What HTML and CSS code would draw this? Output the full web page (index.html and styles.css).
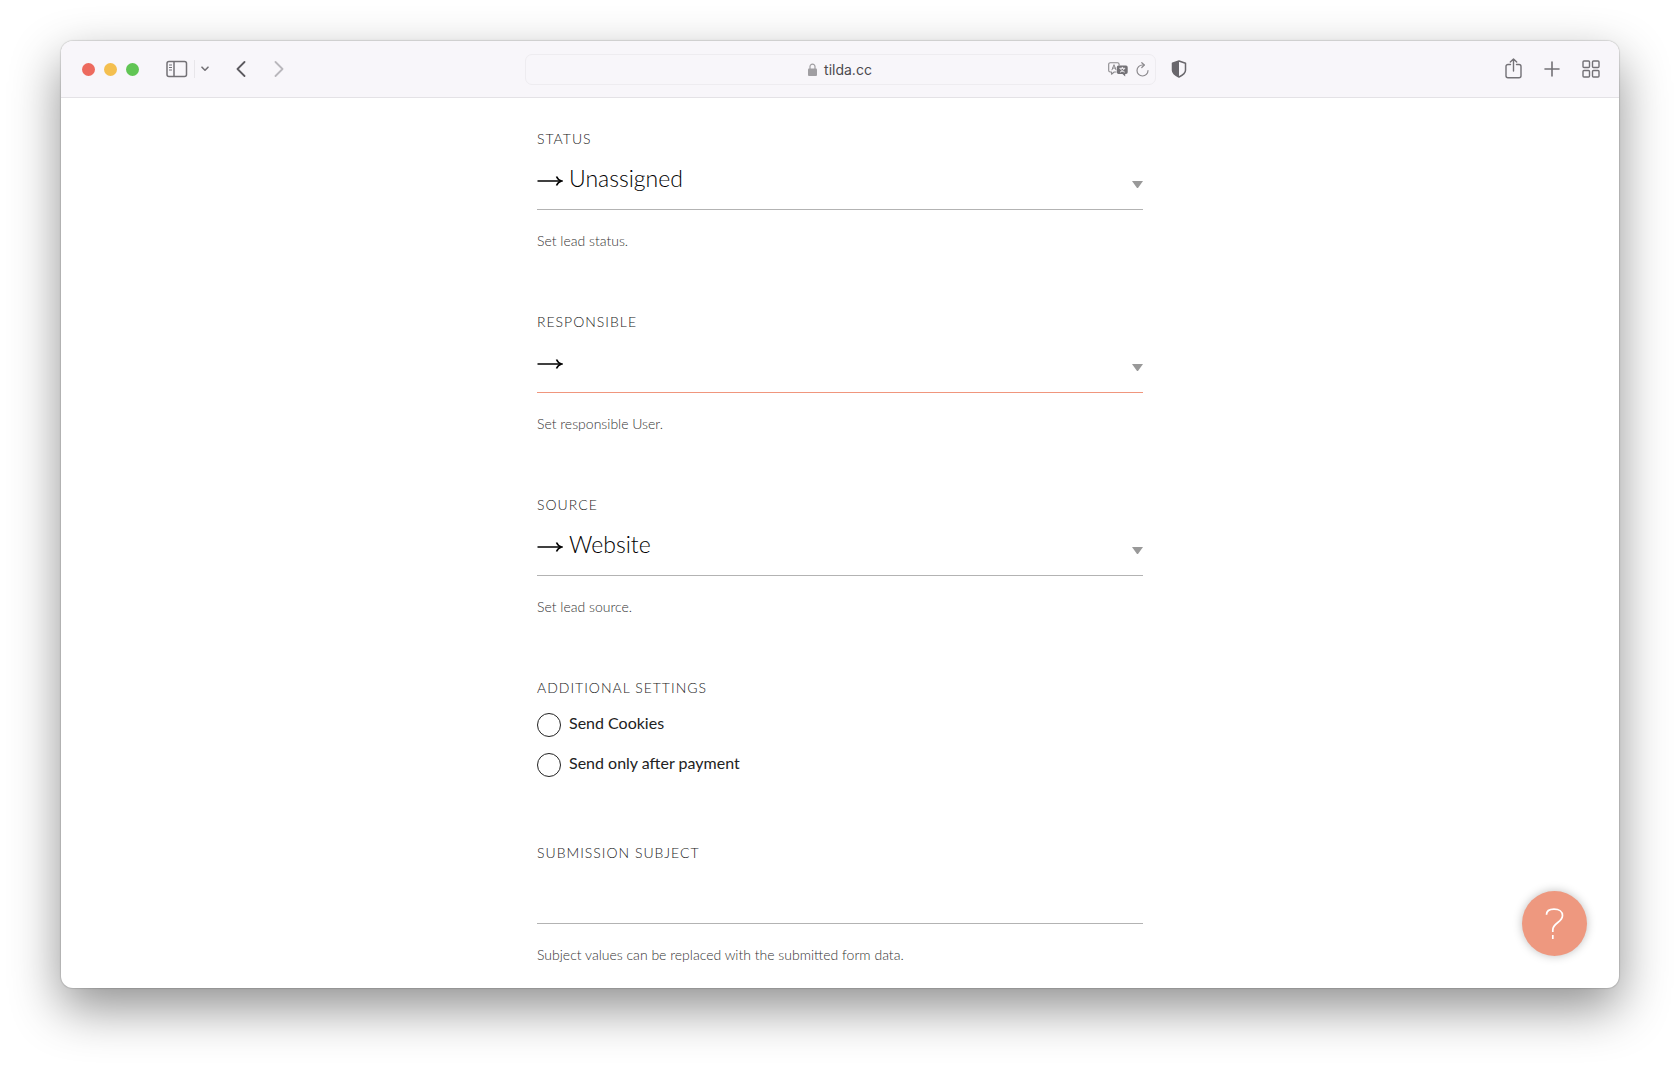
FILE: index.html
```html
<!DOCTYPE html>
<html lang="en">
<head>
    <meta charset="UTF-8">
    <meta name="viewport" content="width=device-width, initial-scale=1.0">
    <title>tilda.cc</title>
    <link rel="stylesheet" href="styles.css">
</head>
<body>
    <div class="window">
        <header class="toolbar">
            <div class="toolbar-left">
                <div class="lights">
                    <span class="light red"></span>
                    <span class="light yellow"></span>
                    <span class="light green"></span>
                </div>
                <button class="tool sidebar" aria-label="Sidebar">
                    <svg width="22" height="18" viewBox="0 0 22 18" fill="none" stroke="#737176" stroke-width="1.5">
                        <rect x="1" y="1.5" width="19.5" height="15" rx="2"/>
                        <path d="M8 1.5v15"/>
                        <path d="M3 5h3M3 7.5h3M3 10h3" stroke-width="1"/>
                    </svg>
                </button>
                <button class="tool menu" aria-label="Tab groups">
                    <svg width="8" height="6" viewBox="0 0 8 6" fill="none" stroke="#737176" stroke-width="1.6" stroke-linecap="round" stroke-linejoin="round"><path d="M1 1.2l3 3 3-3"/></svg>
                </button>
                <button class="tool back" aria-label="Back">
                    <svg width="10" height="16" viewBox="0 0 10 16" fill="none" stroke="#5c5a5f" stroke-width="1.8" stroke-linecap="round" stroke-linejoin="round"><path d="M8.5 1L1.5 8l7 7"/></svg>
                </button>
                <button class="tool forward" aria-label="Forward">
                    <svg width="10" height="16" viewBox="0 0 10 16" fill="none" stroke="#b9b7bc" stroke-width="1.8" stroke-linecap="round" stroke-linejoin="round"><path d="M1.5 1l7 7-7 7"/></svg>
                </button>
            </div>
            <div class="address">
                <div class="url">
                    <svg width="9" height="13" viewBox="0 0 9 13"><path d="M2 6V3.6a2.5 2.5 0 0 1 5 0V6" fill="none" stroke="#a09ea2" stroke-width="1.2"/><rect y="5.5" width="9" height="7.5" rx="1" fill="#a09ea2"/></svg>
                    <span>tilda.cc</span>
                </div>
                <div class="address-tools">
                    <button class="tool" aria-label="Translate">
                        <svg width="20" height="15" viewBox="0 0 20 15" fill="none" stroke-linecap="round" stroke-linejoin="round">
                            <path d="M8 10H6.2L3.5 12.2V10H2.3A1.6 1.6 0 0 1 .7 8.4V2.3A1.6 1.6 0 0 1 2.3.7H9.5A1.6 1.6 0 0 1 11.1 2.3V3" stroke="#8b898d" stroke-width="1.1"/>
                            <path d="M4 7.8L6 2.7l1.9 5M4.7 6.1h2.5" stroke="#8b898d"/>
                            <path d="M10.5 3.5h7.5a1.7 1.7 0 0 1 1.7 1.7v5.1A1.7 1.7 0 0 1 18 12h-.8v2.5L14.5 12h-4a1.7 1.7 0 0 1-1.7-1.7V5.2a1.7 1.7 0 0 1 1.7-1.7z" fill="#737176"/>
                            <path d="M11.8 6.3h5M14.3 5.3v1M12.7 7.2c.7 1.5 2 2.3 3.6 2.8M16 7.2c-.7 1.5-2 2.3-3.6 2.8" stroke="#f8f6fa"/>
                        </svg>
                    </button>
                    <button class="tool" aria-label="Reload">
                        <svg width="13" height="15" viewBox="0 0 13 15" fill="none" stroke="#8b898d" stroke-width="1.2" stroke-linecap="round" stroke-linejoin="round"><path d="M12 8.5a5.5 5.5 0 1 1-5.5-5.500h1.700"/><path d="M5.800.7L8.300 3 5.800 5.500"/></svg>
                    </button>
                </div>
            </div>
            <div class="toolbar-right">
                <button class="tool" aria-label="Privacy report">
                    <svg width="16" height="18" viewBox="0 0 16 18"><path d="M8 1l6.500 2.300v7c0 3-3.500 5.300-6.500 6.700-3-1.400-6.500-3.700-6.500-6.700v-7z" fill="none" stroke="#69676c" stroke-width="1.5" stroke-linejoin="round"/><path d="M8 1v16c-3-1.400-6.500-3.700-6.500-6.700v-7z" fill="#69676c"/></svg>
                </button>
                <div class="actions">
                    <button class="tool share" aria-label="Share">
                        <svg width="17" height="21" viewBox="0 0 17 21" fill="none" stroke="#737176" stroke-width="1.4" stroke-linecap="round" stroke-linejoin="round"><path d="M5.500 6.500H3a2 2 0 0 0-2 2v9.300a2 2 0 0 0 2 2h11a2 2 0 0 0 2-2V8.500a2 2 0 0 0-2-2h-2.500M8.500 13V1M5.300 4.100L8.500 1l3.200 3.100"/></svg>
                    </button>
                    <button class="tool" aria-label="New tab">
                        <svg width="16" height="16" viewBox="0 0 16 16" fill="none" stroke="#737176" stroke-width="1.6" stroke-linecap="round"><path d="M8 1v14M1 8h14"/></svg>
                    </button>
                    <button class="tool" aria-label="Tab overview">
                        <svg width="18" height="18" viewBox="0 0 18 18" fill="none" stroke="#737176" stroke-width="1.4"><rect x="1" y="1" width="6.500" height="6.500" rx="1"/><rect x="10.500" y="1" width="6.500" height="6.500" rx="1"/><rect x="1" y="10.500" width="6.500" height="6.500" rx="1"/><rect x="10.500" y="10.500" width="6.500" height="6.500" rx="1"/></svg>
                    </button>
                </div>
            </div>
        </header>

        <main class="page">
            <form class="form">
                <div class="field">
                    <label class="label" for="status">STATUS</label>
                    <div class="control">
                        <svg class="arrow" width="26" height="12" viewBox="0 0 26 12" fill="none" stroke="#000" stroke-width="1.5"><path d="M.5 6h24"/><path d="M19.500 1.500q1.500 3.500 5 4.500-3.500 1-5 4.500" stroke-width="1.6"/></svg>
                        <select id="status" class="select">
                            <option>Unassigned</option>
                        </select>
                        <span class="caret"></span>
                    </div>
                    <p class="hint">Set lead status.</p>
                </div>
                <div class="field">
                    <label class="label" for="responsible">RESPONSIBLE</label>
                    <div class="control error">
                        <svg class="arrow" width="26" height="12" viewBox="0 0 26 12" fill="none" stroke="#000" stroke-width="1.5"><path d="M.5 6h24"/><path d="M19.500 1.500q1.500 3.500 5 4.500-3.500 1-5 4.500" stroke-width="1.6"/></svg>
                        <select id="responsible" class="select">
                            <option></option>
                        </select>
                        <span class="caret"></span>
                    </div>
                    <p class="hint">Set responsible User.</p>
                </div>
                <div class="field">
                    <label class="label" for="source">SOURCE</label>
                    <div class="control">
                        <svg class="arrow" width="26" height="12" viewBox="0 0 26 12" fill="none" stroke="#000" stroke-width="1.5"><path d="M.5 6h24"/><path d="M19.500 1.500q1.500 3.500 5 4.500-3.500 1-5 4.500" stroke-width="1.6"/></svg>
                        <select id="source" class="select">
                            <option>Website</option>
                        </select>
                        <span class="caret"></span>
                    </div>
                    <p class="hint">Set lead source.</p>
                </div>
                <fieldset class="settings">
                    <legend class="label">ADDITIONAL SETTINGS</legend>
                    <div class="checks">
                        <label class="check"><input type="checkbox"><span>Send Cookies</span></label>
                        <label class="check"><input type="checkbox"><span>Send only after payment</span></label>
                    </div>
                </fieldset>
                <div class="field">
                    <label class="label" for="subject">SUBMISSION SUBJECT</label>
                    <div class="control">
                        <input type="text" id="subject" class="text">
                    </div>
                    <p class="hint">Subject values can be replaced with the submitted form data.</p>
                </div>
            </form>
        </main>

        <button class="help" aria-label="Help">
            <svg width="20" height="32" viewBox="0 0 20 32" fill="none" stroke="#fff" stroke-width="1.7"><path d="M1.500 6.800C1.500 3 4.800 1.200 9 1.200c5.200 0 8.500 2.500 8.500 6.300 0 3.300-2 5-4.700 7-3 2.200-5 4-5 7.500v2"/><path d="M7.800 27v4"/></svg>
        </button>
    </div>
</body>
</html>
```

FILE: styles.css
```css
* {
    box-sizing: border-box;
}
body {
    margin: 0;
    min-height: 100vh;
    padding: 41px 61px 80px;
    display: flex;
    flex-direction: column;
    background-color: #fff;
    font-family: Lato, "Liberation Sans", sans-serif;
}
.window {
    position: relative;
    flex: 1;
    border-radius: 12px;
    background-color: #fff;
    box-shadow: 0 0 1px 1px rgba(0, 0, 0, 0.12), 0 20px 50px rgba(0, 0, 0, 0.44);
}

/* Browser toolbar */
.toolbar {
    display: grid;
    grid-template-columns: 1fr minmax(0, 631px) 1fr;
    align-items: center;
    height: 57px;
    border-bottom: 1px solid #e4e2e6;
    border-radius: 12px 12px 0 0;
    background-color: #f8f6fa;
}
.toolbar-left,
.lights,
.actions,
.address-tools {
    display: flex;
    align-items: center;
}
.toolbar-left {
    padding-left: 21px;
}
.lights {
    gap: 9px;
}
.light {
    width: 13px;
    height: 13px;
    border-radius: 50%;
}
.red {
    background-color: #ed6a5e;
}
.yellow {
    background-color: #f4bf4f;
}
.green {
    background-color: #61c554;
}
.tool {
    display: flex;
    padding: 0;
    border: none;
    background: none;
    cursor: pointer;
}
.sidebar {
    margin-left: 27px;
}
.menu {
    align-items: center;
    height: 18px;
    margin-left: 6px;
    padding-left: 6px;
    border-left: 1px solid #e8e6ea;
}
.back {
    margin-left: 27px;
}
.forward {
    margin-left: 28px;
}
.address {
    display: grid;
    grid-template-columns: 1fr auto 1fr;
    align-items: center;
    height: 31px;
    padding: 0 6px;
    border: 1px solid #eeecf0;
    border-radius: 7px;
}
.url {
    grid-column: 2;
    display: flex;
    align-items: center;
    gap: 7px;
    color: #4c4a4e;
    font-family: Inter, sans-serif;
    font-size: 14px;
}
.address-tools {
    justify-self: end;
    gap: 8px;
}
.toolbar-right {
    display: flex;
    align-items: center;
    justify-content: space-between;
    padding: 0 19px 0 15px;
}
.actions {
    gap: 22px;
}
.share {
    padding-bottom: 2px;
}

/* Form */
.page {
    padding: 31px 24px 22px;
}
.form {
    max-width: 606px;
    margin: 0 auto;
    font-weight: 300;
}
.field + .field {
    margin-top: 61px;
}
.label {
    display: block;
    padding: 0;
    color: #222;
    font-size: 14px;
    line-height: 20px;
    letter-spacing: 1px;
}
.control {
    display: grid;
    grid-template-columns: 32px 1fr 11px;
    align-items: center;
    height: 61px;
    border-bottom: 1px solid #b3b3b3;
}
.error {
    border-color: #f0967d;
}
.arrow {
    grid-area: 1 / 1;
    margin-top: 3px;
}
.select,
.text {
    grid-area: 1 / 1 / 2 / 4;
    width: 100%;
    height: 60px;
    padding: 0;
    border: none;
    outline: none;
    background: none;
    color: #000;
    font: inherit;
    font-size: 23px;
}
.select {
    appearance: none;
    padding: 0 0 2px 32px;
}
.caret {
    grid-area: 1 / 3;
    margin-top: 10px;
    border: solid transparent;
    border-width: 7px 5px 0;
    border-top-color: #999;
    pointer-events: none;
}
.hint {
    margin: 21px 0 0;
    color: #333;
    font-size: 14px;
    line-height: 20px;
}
.settings {
    margin: 61px 0 66px;
    padding: 0;
    border: none;
}
.checks {
    display: grid;
    gap: 16px;
    padding-top: 15px;
}
.check {
    display: flex;
    align-items: center;
    gap: 8px;
    color: #222;
    font-size: 16px;
    font-weight: 400;
    line-height: 20px;
}
.check input {
    appearance: none;
    width: 24px;
    height: 24px;
    margin: 0;
    border: 1px solid #222;
    border-radius: 50%;
}
.check span {
    padding-bottom: 4px;
}

/* Floating help button */
.help {
    position: absolute;
    right: 32px;
    bottom: 32px;
    display: flex;
    align-items: center;
    justify-content: center;
    width: 65px;
    height: 65px;
    padding: 0;
    border: none;
    border-radius: 50%;
    background-color: #ee987f;
    box-shadow: 0 0 10px rgba(0, 0, 0, 0.25);
    cursor: pointer;
}
```
